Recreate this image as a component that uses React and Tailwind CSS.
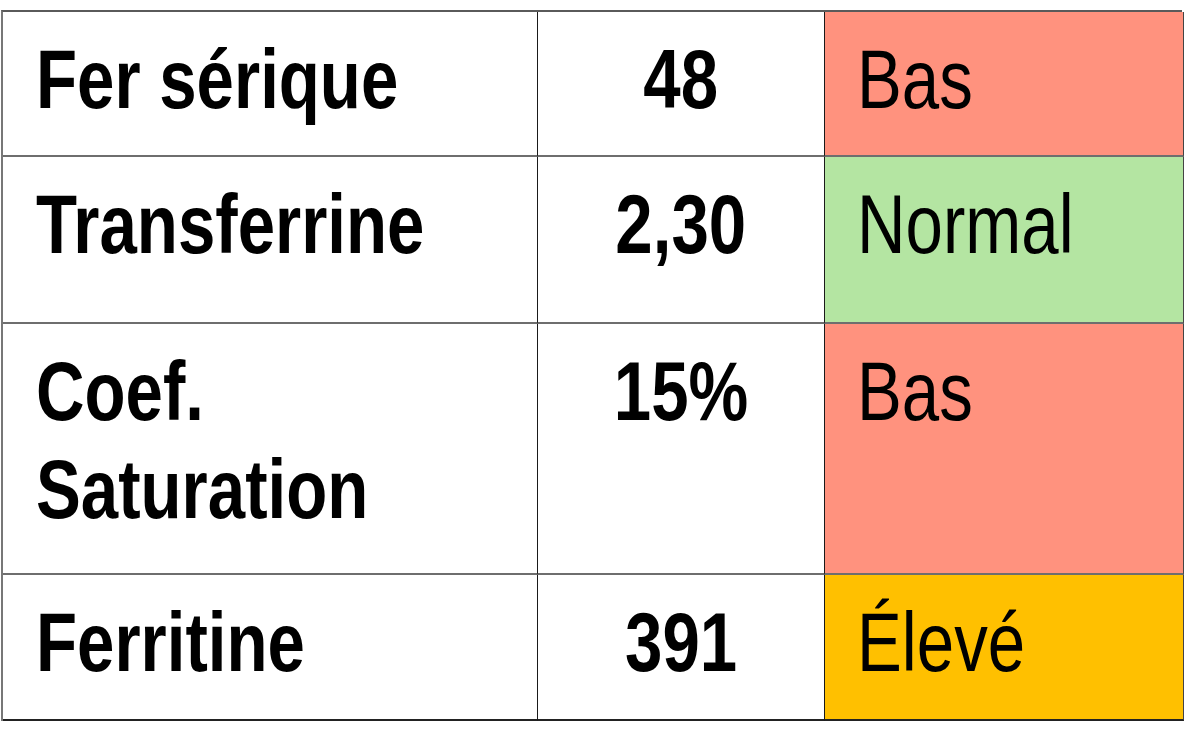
import React from "react";

const rows = [
  { name: ["Fer sérique"], value: "48", status: "Bas", color: "bg-[#ff927e]", h: "h-[145px]" },
  { name: ["Transferrine"], value: "2,30", status: "Normal", color: "bg-[#b4e5a2]", h: "h-[167px]" },
  { name: ["Coef.", "Saturation"], value: "15%", status: "Bas", color: "bg-[#ff927e]", h: "h-[251px]" },
  { name: ["Ferritine"], value: "391", status: "Élevé", color: "bg-[#ffc000]", h: "h-[146px]" },
];

export default function App() {
  return (
    <div className="w-[1185px] h-[740px] bg-white pt-[10px] pl-[1px]" style={{ fontFamily: '"Liberation Sans", Arial, sans-serif' }}>
      <div className="grid grid-cols-[535px_287px_359px] w-[1181px] border-t-2 border-t-[#5a5a5a] border-l-2 border-l-[#777]">
        {rows.map((r, i) => {
          const last = i === rows.length - 1;
          const hb = last ? "border-b-2 border-b-[#222]" : "border-b-2 border-b-[#6e6e6e]";
          return (
            <React.Fragment key={i}>
              <div className={`${r.h} ${hb} border-r border-r-[#1a1a1a] pt-[18px] pl-[33px] text-[84px] leading-[98px] font-bold text-black`}>
                {r.name.map((n, j) => (
                  <div key={j} className="whitespace-nowrap">
                    <span className="inline-block origin-left scale-x-[0.8]">{n}</span>
                  </div>
                ))}
              </div>
              <div className={`${r.h} ${hb} border-r border-r-[#1a1a1a] pt-[18px] text-center text-[84px] leading-[98px] font-bold text-black`}>
                <span className="inline-block origin-center scale-x-[0.8]">{r.value}</span>
              </div>
              <div className={`${r.h} ${hb} ${r.color} border-r border-r-[#444] pt-[18px] pl-[32px] text-[84px] leading-[98px] text-black whitespace-nowrap`}>
                <span className="inline-block origin-left scale-x-[0.8]">{r.status}</span>
              </div>
            </React.Fragment>
          );
        })}
      </div>
    </div>
  );
}
